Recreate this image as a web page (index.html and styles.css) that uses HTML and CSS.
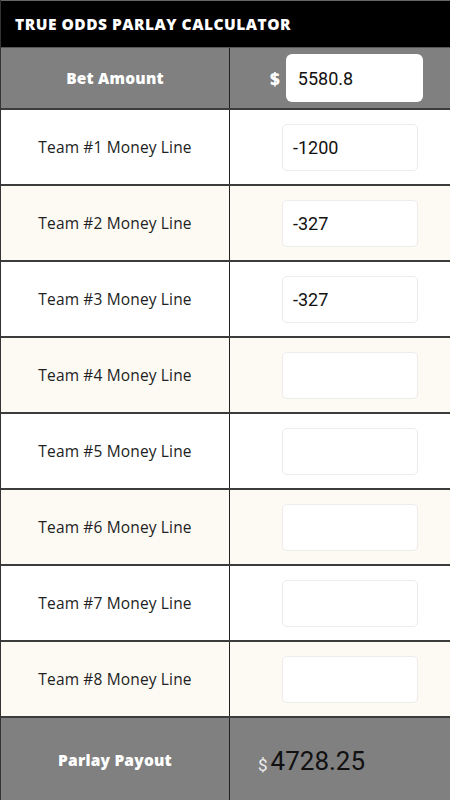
FILE: index.html
```html
<!DOCTYPE html>
<html>
<head>
<meta charset="utf-8">
<link rel="stylesheet" href="styles.css">
</head>
<body>
<div class="app">
  <div class="title">TRUE ODDS PARLAY CALCULATOR</div>
  <div class="row bet">
    <div class="label strong">Bet Amount</div>
    <div class="val betval"><span class="dollar">$</span><div class="box betbox">5580.8</div></div>
  </div>
  <div class="row"><div class="label">Team #1 Money Line</div><div class="val"><div class="box">-1200</div></div></div>
  <div class="row alt"><div class="label">Team #2 Money Line</div><div class="val"><div class="box">-327</div></div></div>
  <div class="row"><div class="label">Team #3 Money Line</div><div class="val"><div class="box">-327</div></div></div>
  <div class="row alt"><div class="label">Team #4 Money Line</div><div class="val"><div class="box"></div></div></div>
  <div class="row"><div class="label">Team #5 Money Line</div><div class="val"><div class="box"></div></div></div>
  <div class="row alt"><div class="label">Team #6 Money Line</div><div class="val"><div class="box"></div></div></div>
  <div class="row"><div class="label">Team #7 Money Line</div><div class="val"><div class="box"></div></div></div>
  <div class="row alt"><div class="label">Team #8 Money Line</div><div class="val"><div class="box"></div></div></div>
  <div class="row payout">
    <div class="label strong">Parlay Payout</div>
    <div class="val payval"><span class="pdollar">$</span><span class="amount">4728.25</span></div>
  </div>
</div>
</body>
</html>
```
FILE: styles.css
```css
html, body {
  margin: 0;
  padding: 0;
  background: #ffffff;
}
.app {
  width: 450px;
  height: 800px;
  overflow: hidden;
  font-family: "Open Sans", "DejaVu Sans", sans-serif;
  border-left: 1px solid #333;
  box-sizing: border-box;
}
.title {
  height: 47px;
  background: #000;
  border-top: 1px solid #666;
  color: #fff;
  font-weight: 800;
  font-size: 15.5px;
  letter-spacing: 0.5px;
  display: flex;
  align-items: center;
  padding-left: 14px;
  box-sizing: border-box;
}
.row {
  display: grid;
  grid-template-columns: 229px 1fr;
  height: 76px;
  border-bottom: 2px solid #3c3c3c;
  box-sizing: border-box;
  background: #fff;
}
.row.alt { background: #fdfaf4; }
.row.bet {
  height: 63px;
  background: #808080;
  border-top: 1px solid #555;
}
.row.payout {
  height: 83px;
  background: #808080;
  border-bottom: none;
}
.label {
  display: flex;
  align-items: center;
  justify-content: center;
  border-right: 1px solid #222;
  font-size: 15.5px;
  letter-spacing: 0.15px;
  color: #222;
}
.label.strong {
  color: #fff;
  font-weight: 800;
  font-size: 15.5px;
  letter-spacing: 0.2px;
}
.val {
  display: flex;
  align-items: center;
  padding-left: 52px;
}
.box {
  width: 136px;
  height: 47px;
  background: #fff;
  border: 1px solid #ececec;
  border-radius: 5px;
  box-sizing: border-box;
  display: flex;
  align-items: center;
  padding-left: 10px;
  font-family: Roboto, "Liberation Sans", sans-serif;
  font-size: 18px;
  color: #111;
}
.betval { padding-left: 40px; }
.dollar {
  color: #fff;
  font-weight: 800;
  font-size: 17px;
  margin-right: 6px;
}
.betbox {
  width: 137px;
  height: 48px;
  border: none;
  border-radius: 6px;
  padding-left: 12px;
}
.payval { padding-left: 28px; padding-top: 2px; }
.pdollar {
  font-family: Roboto, "Liberation Sans", sans-serif;
  color: #eee;
  font-size: 17px;
  margin-top: 8px;
  margin-right: 3px;
}
.amount {
  font-family: Roboto, "Liberation Sans", sans-serif;
  font-size: 26px;
  color: #111;
}
```
